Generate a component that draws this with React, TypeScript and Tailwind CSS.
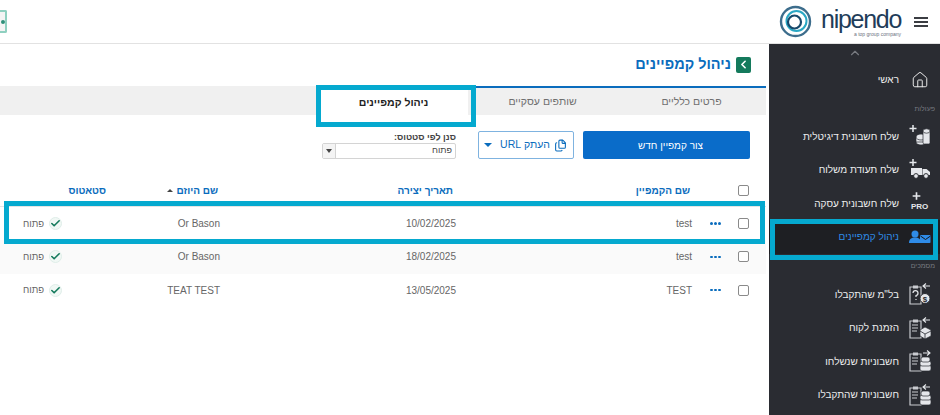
import { ChevronLeft, ChevronUp, Check, Files, Home } from 'lucide-react';
import type { ReactNode } from 'react';

const FONT = "font-['Liberation_Sans',Arial,sans-serif]";
const COLS = 'grid-cols-[36px_29px_245px_233px_115px_1fr]';

function Plus() {
  return <path d="M5 1v7M1.5 4.5h7" stroke="#e5e7eb" strokeWidth="1.5" fill="none" />;
}

function Coins() {
  return (
    <g fill="#e5e7eb" stroke="#2a2c32" strokeWidth="0.7">
      <ellipse cx="13" cy="18" rx="5" ry="3" />
      <rect x="8" y="13" width="10" height="5" />
      <ellipse cx="13" cy="13" rx="5" ry="3" />
      <rect x="15" y="7" width="7" height="13" rx="1.5" />
      <ellipse cx="18.5" cy="7" rx="3.5" ry="2.2" />
    </g>
  );
}

function Truck() {
  return (
    <g fill="#e5e7eb">
      <rect x="3" y="10" width="11" height="7" />
      <path d="M14.5 11h4l3.5 3v3h-7.5z" />
      <circle cx="8" cy="18" r="2.4" stroke="#2a2c32" />
      <circle cx="18" cy="18" r="2.4" stroke="#2a2c32" />
    </g>
  );
}

function Clipboard({ children, arrow = 'in' }: { children?: ReactNode; arrow?: 'in' | 'out' }) {
  return (
    <g>
      <path d="M2 5h11v17H2z" fill="none" stroke="#c9cbd0" strokeWidth="1.2" />
      <rect x="5" y="3.5" width="5" height="3" fill="#c9cbd0" />
      <path
        d={arrow === 'in' ? 'M22 4h-7M18 1.5 15 4l3 2.5' : 'M15 4h7M19 1.5 22 4l-3 2.5'}
        stroke="#e5e7eb"
        strokeWidth="1.1"
        fill="none"
      />
      {children}
    </g>
  );
}

function DocLines() {
  return <path d="M4 9h6M4 12h6M4 15h5" stroke="#c9cbd0" strokeWidth="1.2" />;
}

function SmallCoins() {
  return (
    <g fill="#e5e7eb" stroke="#2a2c32" strokeWidth="0.7">
      <rect x="12" y="16" width="11" height="6" rx="2" />
      <rect x="12" y="12" width="11" height="5" rx="2" />
      <rect x="13" y="8" width="9" height="5" rx="2" />
    </g>
  );
}

const sendItems = [
  {
    label: 'שלח חשבונית דיגיטלית',
    icon: (
      <svg width="24" height="24" viewBox="0 0 24 24">
        <Plus />
        <Coins />
      </svg>
    ),
  },
  {
    label: 'שלח תעודת משלוח',
    icon: (
      <svg width="24" height="24" viewBox="0 0 24 24">
        <Plus />
        <Truck />
      </svg>
    ),
  },
  {
    label: 'שלח חשבונית עסקה',
    icon: (
      <span dir="ltr" className="flex h-6 w-[18px] flex-col items-start">
        <svg width="11" height="10" viewBox="0 0 10 9">
          <Plus />
        </svg>
        <span className="mt-[2px] text-[8px] leading-[8px] font-bold text-[#e5e7eb]">PRO</span>
      </span>
    ),
  },
];

const docItems = [
  {
    label: 'בל"מ שהתקבלו',
    icon: (
      <Clipboard>
        <path d="M5 11a2.5 2.5 0 1 1 3 2.5V15M8 17v1" stroke="#e5e7eb" strokeWidth="1.2" fill="none" />
        <circle cx="17" cy="16.5" r="5" fill="#e5e7eb" stroke="#2a2c32" />
        <text x="17" y="19.5" textAnchor="middle" fontSize="8" fontWeight="700" fill="#2a2c32">
          $
        </text>
      </Clipboard>
    ),
  },
  {
    label: 'הזמנת לקוח',
    icon: (
      <Clipboard>
        <DocLines />
        <path d="M12 14l5-3 6 3v6l-6 3-5-3z" fill="#e5e7eb" stroke="#2a2c32" strokeWidth="0.7" />
        <path d="M12 15l5 3 6-3M17 18v5" stroke="#2a2c32" strokeWidth="0.8" fill="none" />
      </Clipboard>
    ),
  },
  {
    label: 'חשבוניות שנשלחו',
    icon: (
      <Clipboard arrow="out">
        <DocLines />
        <SmallCoins />
      </Clipboard>
    ),
  },
  {
    label: 'חשבוניות שהתקבלו',
    icon: (
      <Clipboard>
        <DocLines />
        <SmallCoins />
      </Clipboard>
    ),
  },
];

const rows = [
  { name: 'test', creator: 'Or Bason', date: '10/02/2025' },
  { name: 'test', creator: 'Or Bason', date: '18/02/2025', shaded: true },
  { name: 'TEST', creator: 'TEAT TEST', date: '13/05/2025' },
];

function SideItem({ label, icon }: { label: string; icon: ReactNode }) {
  return (
    <div className="flex h-[33.5px] items-center text-[10px] text-[#eceded]">
      <span className="flex w-[40px] justify-center">{icon}</span>
      <span className="ms-[1px]">{label}</span>
    </div>
  );
}

function SideLabel({ children }: { children: string }) {
  return <div className="pr-[5px] text-[7px] leading-[9px] text-[#777a80]">{children}</div>;
}

function Checkbox() {
  return <span className="block h-[11px] w-[11px] rounded-[2px] border border-[#8a8a8a] bg-white" />;
}

function Logo() {
  return (
    <div className="flex items-center">
      <svg width="33" height="33" viewBox="0 0 33 33" fill="none">
        <circle cx="16.5" cy="16.5" r="14.5" stroke="#3d6d8c" strokeWidth="2.4" />
        <circle cx="17.5" cy="16" r="10" stroke="#2aa7c4" strokeWidth="2" />
        <circle cx="15.5" cy="17" r="6.5" stroke="#17496b" strokeWidth="2.2" />
      </svg>
      <div className="mt-[3px] ml-[9px] flex flex-col items-end">
        <span className="text-[25px] leading-[21px] tracking-[-1.3px] text-[#1f3d5a]">nipendo</span>
        <span className="mt-[1px] text-[5px] leading-[6px] text-[#6b7280]">a top group company</span>
      </div>
    </div>
  );
}

export default function App() {
  return (
    <div className={`relative flex h-[415px] w-[940px] flex-col overflow-hidden bg-white ${FONT}`}>
      {/* Top bar */}
      <header className="flex h-[44px] shrink-0 items-center justify-between border-b border-[#e2e2e2]">
        <div className="flex h-[23px] w-[7px] items-center justify-end rounded-r-[2px] border-2 border-l-0 border-[#8fd0c0] bg-[#f4f4f4]">
          <span className="h-[4px] w-[4px] rounded-full bg-[#2f8f79]" />
        </div>
        <div className="flex items-center">
          <Logo />
          <div className="mr-[12px] ml-[13px] flex w-[14px] flex-col gap-[2px]">
            <i className="h-[2px] bg-[#3b3d42]" />
            <i className="h-[2px] bg-[#3b3d42]" />
            <i className="h-[2px] bg-[#3b3d42]" />
          </div>
        </div>
      </header>

      <div className="flex min-h-0 flex-1">
        {/* Main column */}
        <main dir="rtl" className="w-[769px] shrink-0">
          <div className="mr-[3px]">
            <div className="flex h-[42px] items-center pr-[15px] pb-[1px]">
              <span className="flex h-[16px] w-[15px] items-center justify-center rounded-[2px] bg-[#147a5c]">
                <ChevronLeft className="h-[13px] w-[13px] text-white" strokeWidth={3} />
              </span>
              <h1 className="mr-[5px] text-[14.5px] font-bold text-[#0a6cbd]">ניהול קמפיינים</h1>
            </div>

            {/* Tabs */}
            <div className="flex h-[29px] bg-[#f0f0f0] text-[10.5px] text-[#6f6f6f]">
              <div className="flex w-[149px] items-center justify-center border-t-2 border-[#0a6cbd]">פרטים כלליים</div>
              <div className="flex w-[149px] items-center justify-center border-t-2 border-[#0a6cbd]">שותפים עסקיים</div>
              <div className="flex w-[149px] items-center justify-center bg-white pt-[5px] font-bold text-[#222]">
                ניהול קמפיינים
              </div>
            </div>

            {/* Toolbar */}
            <div className="flex items-end pt-[16px] pr-[16px]">
              <button className="flex h-[28px] w-[167px] items-center justify-center rounded-[2px] bg-[#0a6cc9] pl-[8px] text-[10px] text-white">
                צור קמפיין חדש
              </button>
              <button className="mr-[9px] flex h-[28px] w-[96px] items-center rounded-[2px] border border-[#7fb3e0] pr-[6px] text-[10.5px] text-[#0a6cbd]">
                <Files className="h-[13px] w-[13px]" strokeWidth={2} />
                <span className="mr-[4px]">העתק URL</span>
                <span className="mr-[8px] h-0 w-0 border-x-[4px] border-t-[4px] border-x-transparent border-t-[#0a6cbd]" />
              </button>
              <div className="mr-[22px] flex w-[134px] flex-col">
                <label className="text-[9px] leading-[11px] font-bold text-[#444]">סנן לפי סטטוס:</label>
                <div className="flex h-[16px] items-center rounded-[2px] border border-[#d4d4d4] text-[9px] text-[#444]">
                  <span className="flex-1 pr-[3px]">פתוח</span>
                  <span className="flex h-full w-[13px] items-center justify-center border-r border-[#d4d4d4] bg-[#f4f4f4]">
                    <span className="h-0 w-0 border-x-[3px] border-t-[4px] border-x-transparent border-t-[#444]" />
                  </span>
                </div>
              </div>
            </div>

            {/* Table */}
            <div className="mt-[22px]">
              <div className={`grid h-[26px] ${COLS} items-center border-b border-[#e4e4e4] pb-[6px] text-[10px] font-bold text-[#0a6cbd]`}>
                <span className="flex justify-center pr-[10px]">
                  <Checkbox />
                </span>
                <span />
                <span className="pr-[11px]">שם הקמפיין</span>
                <span className="pr-[3px]">תאריך יצירה</span>
                <span className="flex items-center pr-[5px]">
                  שם היוזם
                  <span className="mr-[4px] h-0 w-0 border-x-[3px] border-b-[3px] border-x-transparent border-b-[#444]" />
                </span>
                <span className="pr-[2px]">סטאטוס</span>
              </div>
              {rows.map((row) => (
                <div
                  key={row.date}
                  className={`grid h-[33.3px] ${COLS} items-center text-[10px] text-[#666] ${row.shaded ? 'bg-[#fafafa]' : ''}`}
                >
                  <span className="flex justify-center pr-[9px]">
                    <Checkbox />
                  </span>
                  <span className="flex justify-center gap-[1.5px]">
                    <i className="h-[2.5px] w-[2.5px] rounded-full bg-[#0a6cbd]" />
                    <i className="h-[2.5px] w-[2.5px] rounded-full bg-[#0a6cbd]" />
                    <i className="h-[2.5px] w-[2.5px] rounded-full bg-[#0a6cbd]" />
                  </span>
                  <span className="pr-[9px]">{row.name}</span>
                  <span className="pr-[0px]">{row.date}</span>
                  <span className="pr-[3px]">{row.creator}</span>
                  <span className="flex items-center pr-[46px]">
                    <span className="flex h-[13px] w-[13px] items-center justify-center rounded-full border border-[#dfeee9] bg-[#f1f8f5]">
                      <Check className="h-[11px] w-[11px] shrink-0 text-[#147a5c]" strokeWidth={3.5} />
                    </span>
                    <span className="mr-[5px] text-[9.5px]">פתוח</span>
                  </span>
                </div>
              ))}
            </div>
          </div>
        </main>

        {/* Sidebar */}
        <aside dir="rtl" className="w-[171px] shrink-0 bg-[#2a2c32]">
          <div className="flex h-[16px] items-end justify-center">
            <ChevronUp className="h-[14px] w-[14px] text-[#777a80]" />
          </div>
          <div className="mt-[3px]">
            <SideItem
              label="ראשי"
              icon={<Home className="h-[18px] w-[18px] text-[#eceded]" strokeWidth={1.3} />}
            />
          </div>
          <div className="mt-[7px]">
            <SideLabel>פעולות</SideLabel>
          </div>
          <div className="mt-[7px]">
            {sendItems.map((item) => (
              <SideItem key={item.label} label={item.label} icon={item.icon} />
            ))}
          </div>
          <div className="flex h-[33.5px] items-center bg-[#1e1f23] text-[10px] text-[#2f8be6]">
            <span className="flex w-[40px] justify-center">
              <svg width="22" height="14" viewBox="0 0 22 14">
                <circle cx="6" cy="4" r="3.5" fill="#2f8be6" />
                <path d="M0 13c0-4 2.5-5.5 6-5.5S12 9 12 13z" fill="#2f8be6" />
                <rect x="11" y="5" width="10.5" height="8" rx="0.8" fill="#2f8be6" />
                <path d="M11.5 6l5 3.5 5-3.5" stroke="#16181c" fill="none" />
              </svg>
            </span>
            <span className="ms-[1px]">ניהול קמפיינים</span>
          </div>
          <div className="mt-[7px]">
            <SideLabel>מסמכים</SideLabel>
          </div>
          <div className="mt-[8px]">
            {docItems.map((item) => (
              <SideItem
                key={item.label}
                label={item.label}
                icon={
                  <svg width="24" height="24" viewBox="0 0 24 24">
                    {item.icon}
                  </svg>
                }
              />
            ))}
          </div>
        </aside>
      </div>

      {/* Highlight boxes drawn over the screenshot */}
      <div className="pointer-events-none absolute top-[85px] left-[316px] h-[42px] w-[160px] border-[5px] border-[#05a9cf]" />
      <div className="pointer-events-none absolute top-[201px] left-[4px] h-[43px] w-[761px] border-[5px] border-[#05a9cf]" />
      <div className="pointer-events-none absolute top-[219px] left-[770px] h-[41px] w-[168px] border-[5px] border-[#05a9cf]" />
    </div>
  );
}
